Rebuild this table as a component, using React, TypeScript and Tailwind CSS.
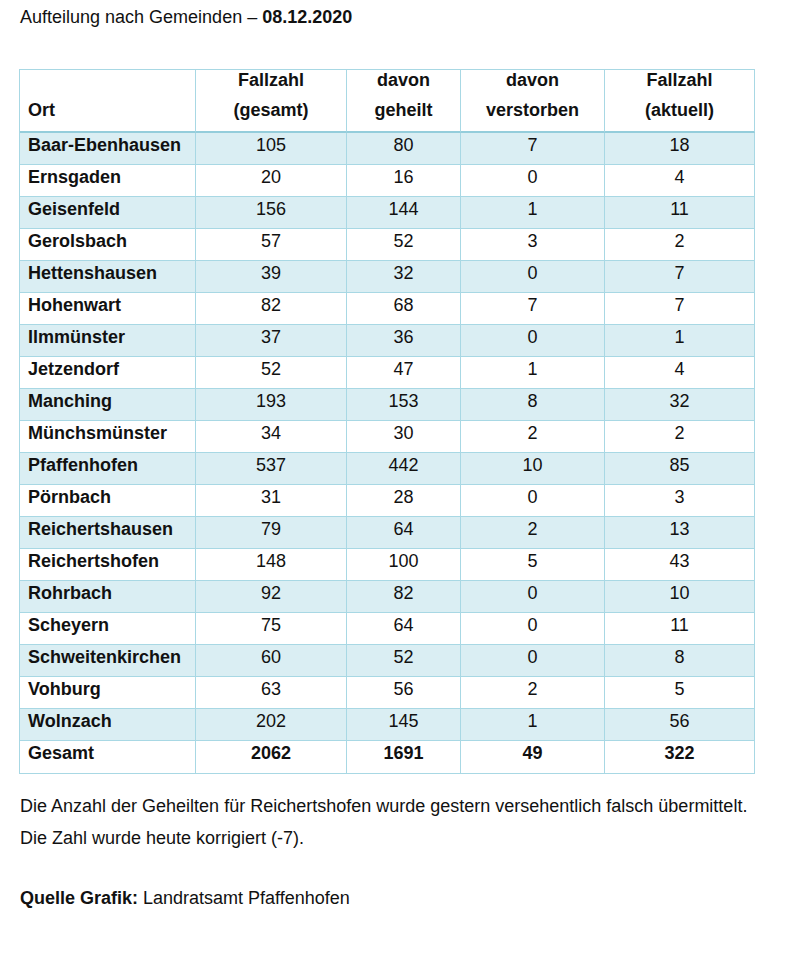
import React from "react";

const rows: [string, string, string, string, string][] = [
  ["Baar-Ebenhausen", "105", "80", "7", "18"],
  ["Ernsgaden", "20", "16", "0", "4"],
  ["Geisenfeld", "156", "144", "1", "11"],
  ["Gerolsbach", "57", "52", "3", "2"],
  ["Hettenshausen", "39", "32", "0", "7"],
  ["Hohenwart", "82", "68", "7", "7"],
  ["Ilmmünster", "37", "36", "0", "1"],
  ["Jetzendorf", "52", "47", "1", "4"],
  ["Manching", "193", "153", "8", "32"],
  ["Münchsmünster", "34", "30", "2", "2"],
  ["Pfaffenhofen", "537", "442", "10", "85"],
  ["Pörnbach", "31", "28", "0", "3"],
  ["Reichertshausen", "79", "64", "2", "13"],
  ["Reichertshofen", "148", "100", "5", "43"],
  ["Rohrbach", "92", "82", "0", "10"],
  ["Scheyern", "75", "64", "0", "11"],
  ["Schweitenkirchen", "60", "52", "0", "8"],
  ["Vohburg", "63", "56", "2", "5"],
  ["Wolnzach", "202", "145", "1", "56"],
];

const headers: [string, string][] = [
  ["Fallzahl", "(gesamt)"],
  ["davon", "geheilt"],
  ["davon", "verstorben"],
  ["Fallzahl", "(aktuell)"],
];

export default function App() {
  return (
    <div
      className="w-[800px] h-[978px] bg-white text-[#111111] text-[18px]"
      style={{ fontFamily: '"Liberation Sans", Arial, sans-serif' }}
    >
      <div className="pl-[20px] pt-px leading-[32px]">
        Aufteilung nach Gemeinden – <span className="font-bold">08.12.2020</span>
      </div>

      <div className="ml-[19px] mt-[36px] w-[736px] border-l border-t border-[#a8d8e4] grid grid-cols-[176px_151px_114px_144px_150px]">
        <div className="h-[63px] border-r border-b-2 border-[#a8d8e4] border-b-[#94cddb] pl-2 pt-[30px] leading-[20px] font-bold">
          Ort
        </div>
        {headers.map((h, i) => (
          <div
            key={i}
            className="h-[63px] border-r border-b-2 border-[#a8d8e4] border-b-[#94cddb] flex flex-col items-center gap-[10px] leading-[20px] font-bold"
          >
            <div>{h[0]}</div>
            <div>{h[1]}</div>
          </div>
        ))}

        {rows.map((r, ri) => {
          const bg = ri % 2 === 0 ? "bg-[#daeef3]" : "bg-white";
          return (
            <React.Fragment key={ri}>
              <div className={`h-[32px] border-r border-b border-[#a8d8e4] pl-2 leading-[24px] font-bold ${bg}`}>
                {r[0]}
              </div>
              {r.slice(1).map((v, ci) => (
                <div
                  key={ci}
                  className={`h-[32px] border-r border-b border-[#a8d8e4] text-center leading-[24px] ${bg}`}
                >
                  {v}
                </div>
              ))}
            </React.Fragment>
          );
        })}
        <div className="h-[33px] border-r border-b border-[#a8d8e4] pl-2 leading-[24px] font-bold bg-white">
          Gesamt
        </div>
        {["2062", "1691", "49", "322"].map((v, ci) => (
          <div
            key={ci}
            className="h-[33px] border-r border-b border-[#a8d8e4] text-center leading-[24px] font-bold bg-white"
          >
            {v}
          </div>
        ))}
      </div>

      <div className="pl-[20px] mt-[16px] leading-[32px]">
        <p>Die Anzahl der Geheilten für Reichertshofen wurde gestern versehentlich falsch übermittelt.</p>
        <p>Die Zahl wurde heute korrigiert (-7).</p>
        <p className="mt-[28px]">
          <span className="font-bold">Quelle Grafik:</span> Landratsamt Pfaffenhofen
        </p>
      </div>
    </div>
  );
}
